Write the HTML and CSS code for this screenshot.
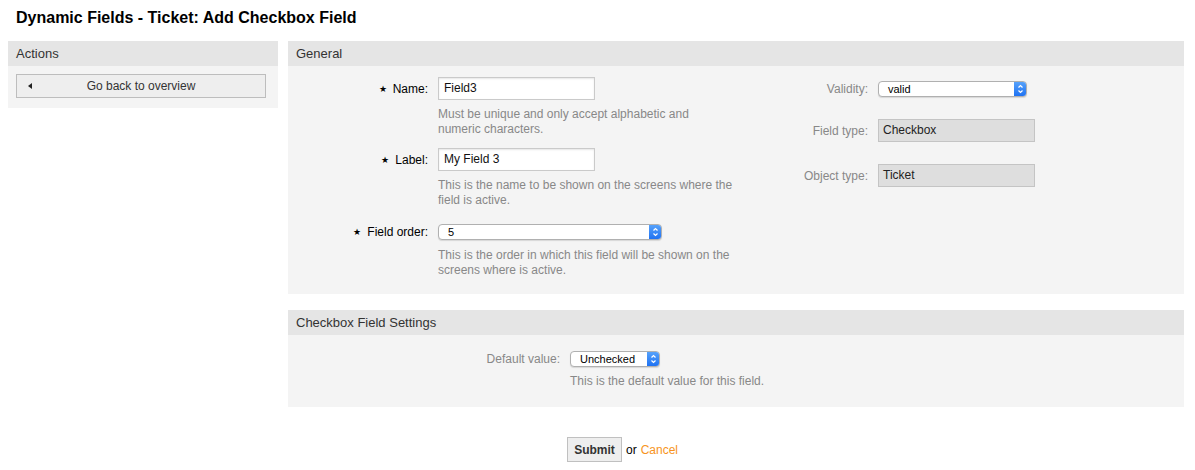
FILE: index.html
```html
<!DOCTYPE html>
<html>
<head>
<meta charset="utf-8">
<link rel="stylesheet" href="styles.css">
</head>
<body>
<h1 class="title">Dynamic Fields - Ticket: Add Checkbox Field</h1>
<div class="layout">
  <aside class="sidebar">
    <div class="panel-head">Actions</div>
    <div class="side-body">
      <a class="back-btn"><span class="tri"></span><span>Go back to overview</span></a>
    </div>
  </aside>
  <main class="main">
    <section class="panel">
      <div class="panel-head">General</div>
      <div class="general-body">
        <div class="col-left">
          <div class="row row-first">
            <label class="lbl req"><span class="star">★</span>Name:</label>
            <div class="input">Field3</div>
          </div>
          <div class="help">Must be unique and only accept alphabetic and numeric characters.</div>
          <div class="row row-next">
            <label class="lbl req"><span class="star">★</span>Label:</label>
            <div class="input">My Field 3</div>
          </div>
          <div class="help">This is the name to be shown on the screens where the field is active.</div>
          <div class="row row-next2">
            <label class="lbl req"><span class="star">★</span>Field order:</label>
            <div class="select sel-order"><span class="sel-text">5</span><span class="stepper"><svg width="13" height="16" viewBox="0 0 13 16"><path d="M4.5 6.5 L6.5 4.5 L8.5 6.5 M4.5 9.5 L6.5 11.5 L8.5 9.5" fill="none" stroke="#fff" stroke-width="1.2"/></svg></span></div>
          </div>
          <div class="help help-order">This is the order in which this field will be shown on the screens where is active.</div>
        </div>
        <div class="col-right">
          <div class="row row-first">
            <label class="lbl lbl-r">Validity:</label>
            <div class="select sel-valid"><span class="sel-text">valid</span><span class="stepper"><svg width="13" height="16" viewBox="0 0 13 16"><path d="M4.5 6.5 L6.5 4.5 L8.5 6.5 M4.5 9.5 L6.5 11.5 L8.5 9.5" fill="none" stroke="#fff" stroke-width="1.2"/></svg></span></div>
          </div>
          <div class="row row-ftype">
            <label class="lbl lbl-r">Field type:</label>
            <div class="ro">Checkbox</div>
          </div>
          <div class="row row-otype">
            <label class="lbl lbl-r">Object type:</label>
            <div class="ro">Ticket</div>
          </div>
        </div>
      </div>
    </section>
    <section class="panel panel-2">
      <div class="panel-head">Checkbox Field Settings</div>
      <div class="settings-body">
        <div class="row row-default">
          <label class="lbl lbl-wide">Default value:</label>
          <div class="select sel-default"><span class="sel-text">Unchecked</span><span class="stepper"><svg width="13" height="16" viewBox="0 0 13 16"><path d="M4.5 6.5 L6.5 4.5 L8.5 6.5 M4.5 9.5 L6.5 11.5 L8.5 9.5" fill="none" stroke="#fff" stroke-width="1.2"/></svg></span></div>
        </div>
        <div class="help help-default">This is the default value for this field.</div>
      </div>
    </section>
    <div class="actions">
      <button class="submit">Submit</button>
      <span class="or">or</span>
      <a class="cancel">Cancel</a>
    </div>
  </main>
</div>
</body>
</html>
```

FILE: styles.css
```css
* { box-sizing: border-box; }
body {
  margin: 0;
  font-family: "Liberation Sans", Arial, sans-serif;
  font-size: 12px;
  color: #000;
  background: #fff;
}
.title {
  margin: 0;
  height: 41px;
  padding: 9px 16px 0;
  font-size: 16px;
  line-height: 18px;
  font-weight: bold;
  color: #000;
}
.layout {
  display: flex;
  gap: 10px;
  margin: 0 11px 0 8px;
  align-items: flex-start;
}
.sidebar {
  width: 270px;
  flex: none;
  background: #f4f4f4;
}
.panel-head {
  height: 25px;
  line-height: 25px;
  padding-left: 8px;
  font-size: 13px;
  color: #333;
  background: #e5e5e5;
}
.side-body {
  padding: 8px 12px 10px 8px;
}
.back-btn {
  display: flex;
  align-items: center;
  position: relative;
  height: 24px;
  width: 250px;
  border: 1px solid #bdbdbd;
  background: #eeeeee;
  color: #333;
  font-size: 12px;
  justify-content: center;
}
.back-btn .tri {
  position: absolute;
  left: 11px;
  top: 8px;
  width: 0;
  height: 0;
  border-top: 3px solid transparent;
  border-bottom: 3px solid transparent;
  border-right: 4px solid #222;
}
.main {
  flex: 1;
  min-width: 0;
}
.panel {
  background: #f4f4f4;
}
.panel-2 {
  margin-top: 16px;
}
.general-body {
  display: flex;
  height: 228px;
}
.col-left {
  width: 448px;
  flex: none;
}
.col-right {
  flex: 1;
}
.row {
  display: flex;
  align-items: center;
  height: 23px;
}
.row-first { margin-top: 11px; }
.row-next { margin-top: 11px; }
.row-next2 { margin-top: 12px; }
.row-ftype { margin-top: 19px; }
.row-otype { margin-top: 22px; }
.lbl {
  width: 150px;
  flex: none;
  padding-right: 10px;
  text-align: right;
  color: #000;
}
.lbl-r {
  width: 142px;
  color: #888;
}
.lbl-wide {
  width: 282px;
  color: #888;
}
.star {
  font-size: 9px;
  margin-right: 6px;
  position: relative;
  top: -1px;
}
.input {
  width: 157px;
  height: 23px;
  border: 1px solid #cacaca;
  background: #fff;
  box-shadow: inset 0 1px 2px rgba(0,0,0,0.1);
  padding-left: 5px;
  line-height: 21px;
  font-size: 12px;
  color: #111;
}
.help {
  margin: 7px 0 0 150px;
  width: 296px;
  color: #888;
  font-size: 12px;
  line-height: 15px;
}
.help-order { margin-top: 5px; }
.select {
  display: flex;
  height: 16px;
  border: 1px solid #b0b0b0;
  border-radius: 4px;
  background: #fff;
  box-shadow: 0 1px 1px rgba(0,0,0,0.12);
  font-size: 11px;
  overflow: hidden;
}
.sel-text {
  flex: 1;
  padding-left: 9px;
  line-height: 14px;
  color: #000;
}
.stepper {
  width: 13px;
  flex: none;
  height: 16px;
  margin: -1px -1px -1px 0;
  background: linear-gradient(#5aa5fb, #1b6ff2);
  border-radius: 0 4px 4px 0;
}
.stepper svg { display: block; }
.sel-order { width: 224px; }
.sel-valid { width: 149px; }
.sel-default { width: 90px; }
.ro {
  width: 157px;
  height: 23px;
  border: 1px solid #c4c4c4;
  background: #dedede;
  padding-left: 4px;
  line-height: 21px;
  color: #222;
}
.settings-body {
  height: 72px;
  padding-top: 12px;
}
.help-default {
  margin-left: 282px;
  margin-top: 4px;
  width: auto;
}
.actions {
  display: flex;
  align-items: center;
  margin-top: 30px;
  padding-left: 279px;
}
.submit {
  height: 25px;
  width: 55px;
  padding: 0;
  border: 1px solid #c0c0c0;
  background: #eeeeee;
  font-family: "Liberation Sans", Arial, sans-serif;
  font-weight: bold;
  font-size: 12px;
  color: #333;
}
.or {
  margin-left: 4px;
  color: #000;
}
.cancel {
  margin-left: 4px;
  color: #f7941d;
}
```
